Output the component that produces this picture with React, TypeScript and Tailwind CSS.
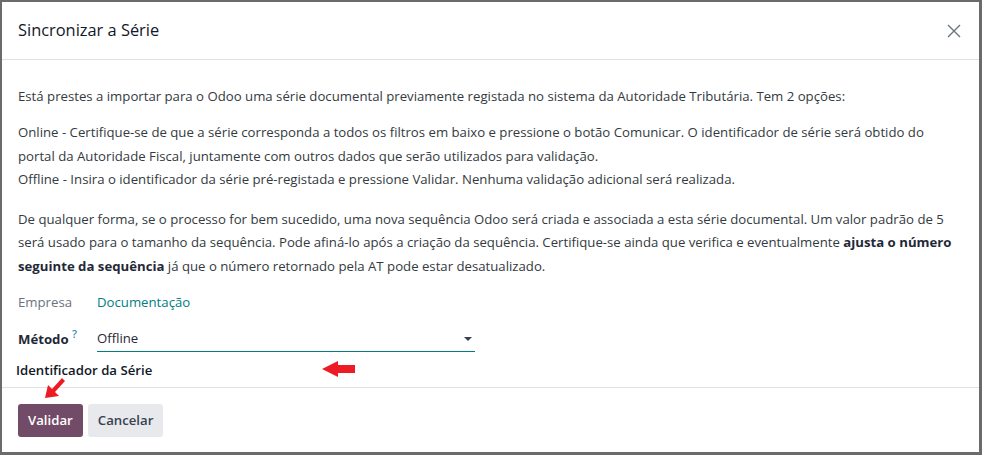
import { useState } from "react";

const FONT = "font-['Open_Sans','Noto_Sans',sans-serif]";

function CloseIcon() {
  return (
    <svg width="14" height="14" viewBox="0 0 14 14" className="text-[#6b7280]">
      <path d="M1 1 L13 13 M13 1 L1 13" stroke="currentColor" strokeWidth="1.4" />
    </svg>
  );
}

// red annotation arrows drawn on top of the form
function ArrowLeft() {
  return (
    <svg width="34" height="20" viewBox="0 0 34 20">
      <polygon points="0,9 16,1 16,5 33,5 33,13 16,13 16,17" fill="#ed1c24" />
    </svg>
  );
}

function ArrowDownLeft() {
  return (
    <svg width="22" height="22" viewBox="0 0 22 22">
      <polygon points="1,21 4,8 8,12 18,1 21,4 11,15 15,19" fill="#ed1c24" />
    </svg>
  );
}

export default function App() {
  const [method, setMethod] = useState("Offline");

  return (
    <div className={`h-[455px] w-[982px] bg-[#6b6b6b] pt-[2px] pl-[2px] pr-[3px] pb-[3px] ${FONT}`}>
      <div className="relative flex h-full flex-col bg-white text-[#343a40]">
        {/* header */}
        <div className="flex h-[58px] shrink-0 items-center justify-between border-b border-[#dee2e6] pl-4 pr-[14px]">
          <h4 className="text-[16.4px] text-[#111827]">Sincronizar a Série</h4>
          <button className="p-1">
            <CloseIcon />
          </button>
        </div>

        {/* body */}
        <div className="flex-1 px-4 pt-[25px] text-[13.2px] leading-[23.5px]">
          <p className="mb-[12.5px]">
            Está prestes a importar para o Odoo uma série documental previamente registada no sistema da
            Autoridade Tributária. Tem 2 opções:
          </p>
          <p className="mb-[16px]">
            Online - Certifique-se de que a série corresponda a todos os filtros em baixo e pressione o botão
            Comunicar. O identificador de série será obtido do portal da Autoridade Fiscal, juntamente com outros
            dados que serão utilizados para validação.
            <br />
            Offline - Insira o identificador da série pré-registada e pressione Validar. Nenhuma validação
            adicional será realizada.
          </p>
          <p className="mb-[12.5px]">
            De qualquer forma, se o processo for bem sucedido, uma nova sequência Odoo será criada e associada a
            esta série documental. Um valor padrão de 5 será usado para o tamanho da sequência. Pode afiná-lo após
            a criação da sequência. Certifique-se ainda que verifica e eventualmente{" "}
            <b className="text-[#1f2937]">ajusta o número seguinte da sequência</b> já que o número retornado pela
            AT pode estar desatualizado.
          </p>

          <div className="flex items-center">
            <span className="w-[79px] text-[#6b7280]">Empresa</span>
            <span className="text-[#017e84]">Documentação</span>
          </div>

          <div className="mt-[13px] flex items-center">
            <span className="w-[79px] font-bold text-[#1f2937]">
              Método <sup className="text-[11px] font-semibold text-[#3b8fb5]">?</sup>
            </span>
            <div className="relative w-[378px] border-b border-[#017e84]">
              <select
                value={method}
                onChange={(e) => setMethod(e.target.value)}
                className="h-[24px] w-full appearance-none bg-transparent text-[#1f2937] outline-none"
              >
                <option>Online</option>
                <option>Offline</option>
              </select>
              <span className="pointer-events-none absolute right-[3px] top-[10px] h-0 w-0 border-x-[4px] border-t-[4px] border-x-transparent border-t-[#374151]" />
            </div>
          </div>

          <div className="-ml-[2px] mt-[7px] font-semibold text-[#111827]">Identificador da Série</div>
        </div>

        {/* footer */}
        <div className="flex h-[65px] shrink-0 items-start gap-[5px] border-t border-[#dee2e6] px-4 pt-[16px]">
          <button className="h-[33px] rounded-[3px] bg-[#714b67] px-[10px] text-[13.2px] font-semibold text-white">
            Validar
          </button>
          <button className="h-[33px] rounded-[3px] bg-[#e7e9ed] px-[10px] text-[13.2px] font-semibold text-[#374151]">
            Cancelar
          </button>
        </div>

        <div className="absolute left-[320px] top-[358px]">
          <ArrowLeft />
        </div>
        <div className="absolute left-[42px] top-[375px]">
          <ArrowDownLeft />
        </div>
      </div>
    </div>
  );
}
